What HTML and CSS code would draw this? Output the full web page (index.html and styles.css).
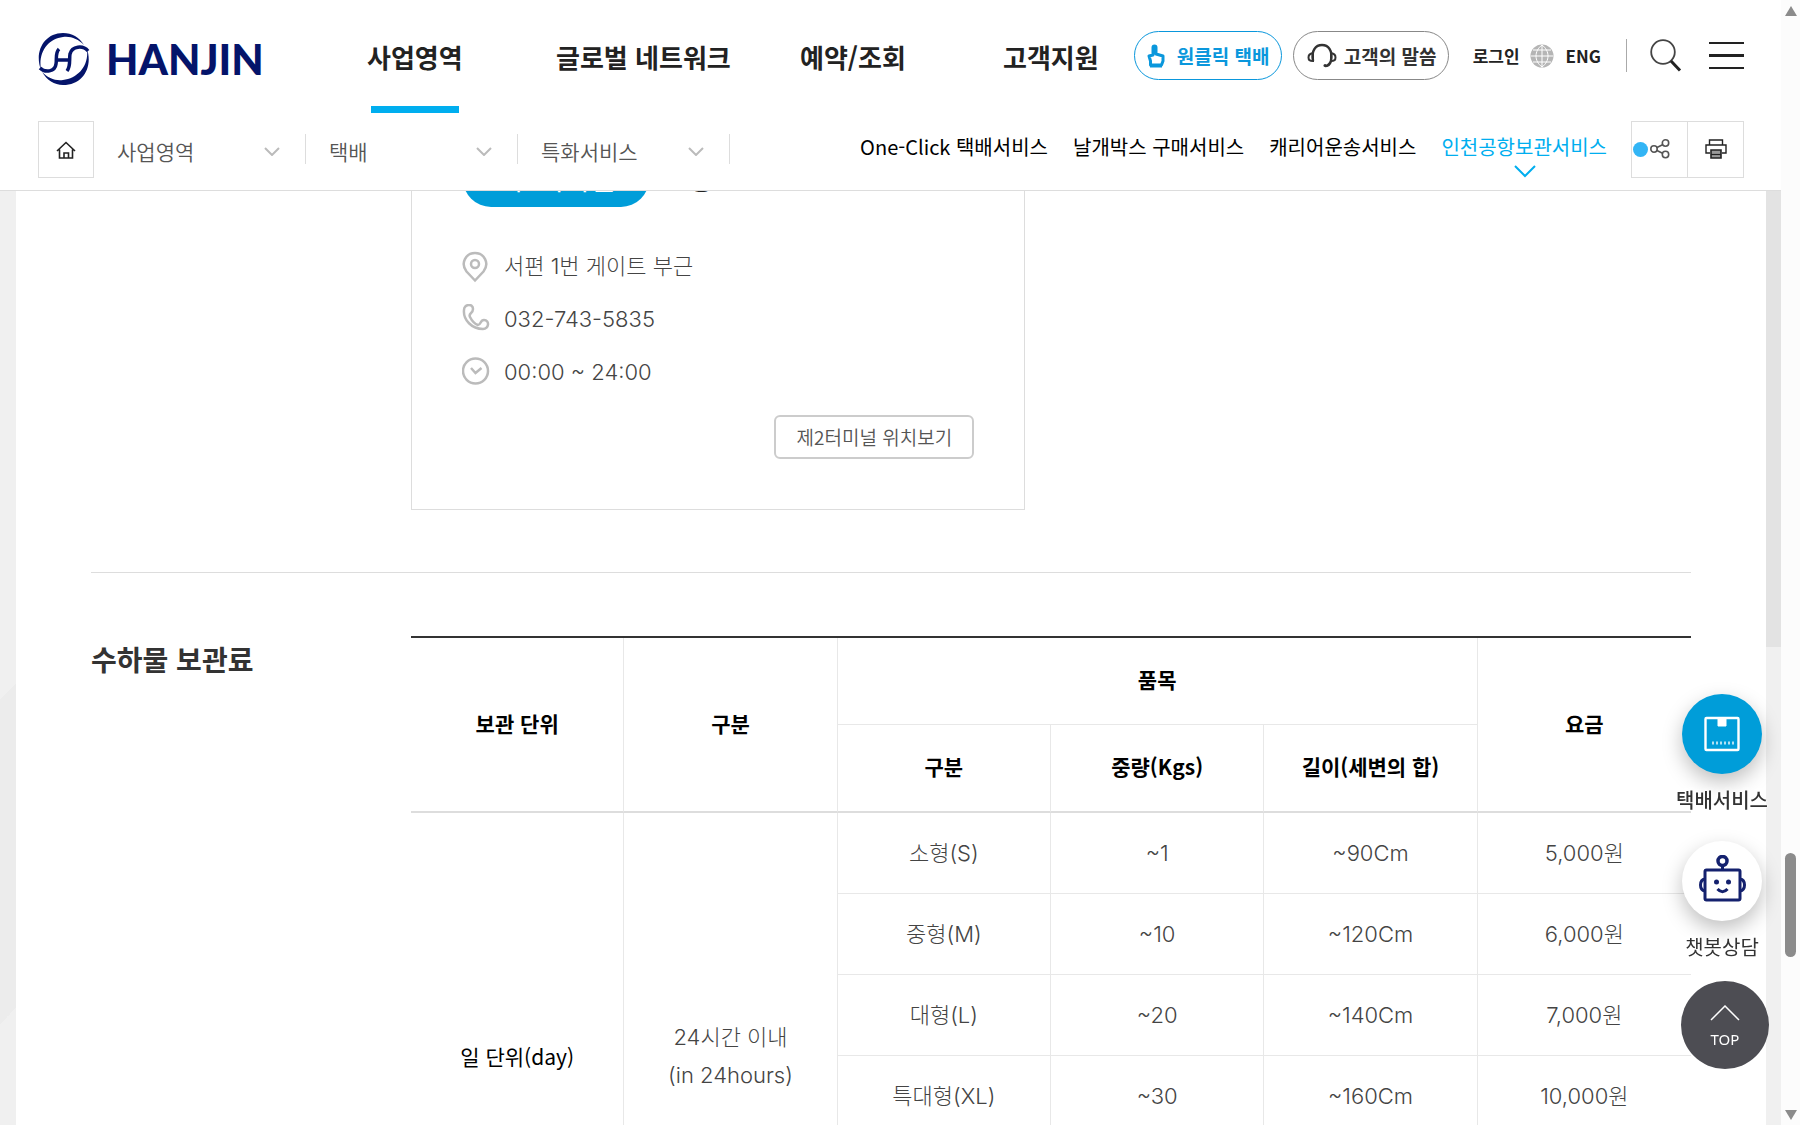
FILE: index.html
```html
<!DOCTYPE html>
<html lang="ko">
<head>
<meta charset="utf-8">
<title>인천공항보관서비스 | HANJIN</title>
<link rel="stylesheet" href="styles.css">
</head>
<body>
<div class="page">
  <header class="header">
    <div class="topbar">
      <a class="logo" href="#">
        <svg width="52" height="54" viewBox="0 0 52 54" fill="none" aria-hidden="true">
          <path d="M3 38C-4 20 6 1 25 1c9 0 16 4 21 12C40 7 33 4 25 5 10 7 0 20 3 38Z" fill="#04146a"/>
          <path d="M49 17c6 18-4 36-24 36C16 53 9 48 4 40c6 6 13 9 21 8C40 46 51 34 49 17Z" fill="#04146a"/>
          <path d="M2 36c5 5 15 4 16-4 1-5-1-11 3-15M50 19c-5-6-16-5-18 3-1 5 1 12-3 17M20 28h11" stroke="#04146a" stroke-width="3.500"/>
        </svg>
        <span>HANJIN</span>
      </a>
      <nav class="gnb" aria-label="주 메뉴">
        <a class="current" href="#">사업영역</a>
        <a href="#">글로벌 네트워크</a>
        <a href="#">예약/조회</a>
        <a href="#">고객지원</a>
      </nav>
      <div class="utils">
        <a class="pill pill-blue" href="#">
          <svg width="18" height="24" viewBox="0 0 18 24" fill="none" stroke="#0a97dc" stroke-width="3" aria-hidden="true"><path d="M3.500 21V17L2 12l4-1V3.500a1.500 1.500 0 0 1 3 0V10l7 2v5l-1.500 4Z" stroke-linejoin="round"/><path d="M3 22h12"/></svg>
          원클릭 택배
        </a>
        <a class="pill pill-gray" href="#">
          <svg width="30" height="25" viewBox="0 0 30 25" fill="none" stroke="#333" stroke-width="2.500" aria-hidden="true"><path d="M6 18C4 7 9 2 15 2s11 5 9 16c-1 3-3 5-6 5"/><path d="M6 10c-6 1-6 8 0 8ZM24 10c6 1 6 8 0 8Z" stroke-width="2"/><circle cx="18" cy="22.500" r="1.500" fill="#333" stroke="none"/></svg>
          고객의 말씀
        </a>
        <a class="login" href="#">로그인</a>
        <a class="lang" href="#">
          <svg width="24" height="24" viewBox="0 0 24 24" aria-hidden="true"><circle cx="12" cy="12" r="11.500" fill="#b5b5b5"/><path d="M12 1v22M1 12h22M3 6h18M3 18h18M12 1C4 7 4 17 12 23M12 1c8 6 8 16 0 22" fill="none" stroke="#fff" stroke-width="1"/></svg>
          ENG
        </a>
        <button class="search" type="button" aria-label="검색">
          <svg width="32" height="34" viewBox="0 0 32 34" fill="none"><circle cx="13" cy="13" r="11.800" stroke="#444" stroke-width="1.800"/><path d="m21 22 9 9.500" stroke="#222" stroke-width="3"/></svg>
        </button>
        <button class="menu" type="button" aria-label="전체 메뉴"><i></i><i></i><i></i></button>
      </div>
    </div>
    <div class="subbar">
      <a class="home" href="#" aria-label="홈">
        <svg width="20" height="18" viewBox="0 0 20 18" fill="none" stroke="#222" stroke-width="1.600"><path d="M1 10 10 1.500 19 10M3.500 8.500V17h13V8.500M8 17v-5h4.500v5"/></svg>
      </a>
      <button class="crumb" type="button">사업영역<svg width="16" height="9" viewBox="0 0 16 9"><path d="m1 1 7 7 7-7"/></svg></button>
      <button class="crumb" type="button">택배<svg width="16" height="9" viewBox="0 0 16 9"><path d="m1 1 7 7 7-7"/></svg></button>
      <button class="crumb" type="button">특화서비스<svg width="16" height="9" viewBox="0 0 16 9"><path d="m1 1 7 7 7-7"/></svg></button>
      <nav class="lnb" aria-label="특화서비스 메뉴">
        <a href="#">One-Click 택배서비스</a>
        <a href="#">날개박스 구매서비스</a>
        <a href="#">캐리어운송서비스</a>
        <a class="current" href="#">인천공항보관서비스<svg width="22" height="13" viewBox="0 0 22 13"><path d="m1 1 10 10L21 1"/></svg></a>
      </nav>
      <div class="tools">
        <button type="button" class="share" aria-label="공유">
          <svg width="20" height="20" viewBox="0 0 20 20" fill="none" stroke="#555" stroke-width="1.600"><circle cx="4" cy="10" r="3.200"/><circle cx="15.500" cy="4" r="3.200"/><circle cx="15.500" cy="15.500" r="3.200"/><path d="m7 8.500 6-3M7 11.500l6 3"/></svg>
        </button>
        <button type="button" aria-label="인쇄">
          <svg width="22" height="20" viewBox="0 0 22 20" fill="none" stroke="#222" stroke-width="1.400"><path d="M4.500 6V1h13v5M5 14H1V6h20v8h-4"/><path d="M6 11h10v8H6Z" fill="#999" stroke-width="1.600"/><path d="M6 15.500h10" stroke-width="1.200"/></svg>
        </button>
      </div>
    </div>
  </header>

  <main class="main">
    <div class="panel">
      <section class="section location">
        <div class="card">
          <div class="card-head"><strong class="terminal">제2터미널</strong><span class="floor">3층</span></div>
          <ul class="info">
            <li><svg width="28" height="32" viewBox="0 0 28 32"><path d="M13 29.500 4.500 20.500C-2 12 4 2 13 2s15 10 8.500 18.500Z"/><circle cx="13" cy="13" r="4"/></svg>서편 1번 게이트 부근</li>
            <li><svg width="28" height="32" viewBox="0 0 28 32"><path d="M2 6c0-6 9-7 9-1 0 5-5 4-3 8s5 7 8 8c3 0 2-5 6-5 6 0 5 9-1 9C10 25 1 16 2 6Z"/></svg>032-743-5835</li>
            <li><svg width="28" height="32" viewBox="0 0 28 32"><circle cx="13.500" cy="14" r="12.500"/><path d="m9 11 4.500 5 6-5"/></svg>00:00 ~ 24:00</li>
          </ul>
          <a class="map-link" href="#">제2터미널 위치보기</a>
        </div>
      </section>

      <section class="section fees">
        <h2>수하물 보관료</h2>
        <table>
          <thead>
            <tr><th rowspan="2" scope="col">보관 단위</th><th rowspan="2" scope="col">구분</th><th colspan="3" scope="colgroup" class="group">품목</th><th rowspan="2" scope="col">요금</th></tr>
            <tr><th scope="col">구분</th><th scope="col">중량(Kgs)</th><th scope="col" class="inner-last">길이(세변의 합)</th></tr>
          </thead>
          <tbody>
            <tr><th rowspan="6" scope="rowgroup">일 단위(day)</th><td rowspan="6">24시간 이내<br>(in 24hours)</td><td>소형(S)</td><td>~1</td><td>~90Cm</td><td>5,000원</td></tr>
            <tr><td>중형(M)</td><td>~10</td><td>~120Cm</td><td>6,000원</td></tr>
            <tr><td>대형(L)</td><td>~20</td><td>~140Cm</td><td>7,000원</td></tr>
            <tr><td>특대형(XL)</td><td>~30</td><td>~160Cm</td><td>10,000원</td></tr>
            <tr><td></td><td></td><td></td><td></td></tr>
            <tr><td></td><td></td><td></td><td></td></tr>
          </tbody>
        </table>
      </section>
    </div>
  </main>
</div>

<aside class="quick">
  <a class="quick-item strong" href="#">
    <span class="disc blue"><svg width="36" height="36" viewBox="0 0 36 36" fill="none" stroke="#fff"><rect x="1.500" y="2" width="33" height="32" rx="1" stroke-width="2.400"/><path d="M14 2h8v8h-8Z" fill="#fff" stroke-width="1"/><path d="M8 27h22" stroke-width="3" stroke-dasharray="2 2" opacity=".7"/></svg></span>
    택배서비스
  </a>
  <a class="quick-item" href="#">
    <span class="disc"><svg width="48" height="48" viewBox="0 4 48 48" fill="none" stroke="#14216e" stroke-width="3"><rect x="7" y="19" width="35" height="30" rx="1.500"/><circle cx="24.500" cy="10" r="4.500" stroke-width="3.500"/><path d="M24.500 14v5M7 28c-6 1-6 11 0 12M42 28c6 1 6 11 0 12M19.500 38c3 3.500 7 3.500 10 0"/><circle cx="18.500" cy="31" r="2.500" fill="#14216e" stroke="none"/><circle cx="30.500" cy="31" r="2.500" fill="#14216e" stroke="none"/></svg></span>
    챗봇상담
  </a>
  <button class="top" type="button"><svg width="30" height="16" viewBox="0 0 30 16" fill="none" stroke="#fff" stroke-width="1.500"><path d="M1 15 15 1l14 14"/></svg>TOP</button>
</aside>

<div class="scrollbar" aria-hidden="true">
  <svg width="14" height="12" viewBox="0 0 14 12"><path d="m7 1 6 10H1Z"/></svg>
  <div class="track"><div class="thumb"></div></div>
  <svg width="14" height="12" viewBox="0 0 14 12"><path d="m7 11 6-10H1Z"/></svg>
</div>
</body>
</html>
```
FILE: styles.css
```css
* { box-sizing: border-box; }

body {
  margin: 0;
  display: flex;
  height: 100vh;
  overflow: hidden;
  background: #fff;
  color: #222;
  font-family: "Noto Sans CJK KR", sans-serif;
}

a { color: inherit; text-decoration: none; }
button { padding: 0; border: 0; background: none; color: inherit; font: inherit; cursor: pointer; }
svg { flex: none; }

.page { flex: 1; min-width: 0; display: flex; flex-direction: column; }

/* header */
.header { flex: none; background: #fff; border-bottom: 1px solid #ddd; position: relative; z-index: 1; }
.topbar { display: flex; height: 113px; padding: 0 37px 0 38px; }

.logo { display: flex; align-items: center; gap: 16px; width: 329px; height: 118px; color: #04146a; }
.logo span { font: 900 42px/48px Lato, sans-serif; }

.gnb { display: grid; grid-template-columns: 189px 244px 203px auto; height: 113px; font-size: 26px; font-weight: 700; line-height: 114px; white-space: nowrap; }
.gnb a { justify-self: start; position: relative; height: 113px; }
.gnb .current::after { content: ""; position: absolute; left: 4px; right: 4px; bottom: 0; height: 7px; background: #00aeef; }

.utils { display: flex; align-items: center; margin-left: auto; height: 111px; font-size: 17px; font-weight: 700; white-space: nowrap; }
.pill { display: flex; align-items: center; height: 49px; border: 1px solid; border-radius: 25px; font-size: 19px; }
.pill-blue { width: 148px; padding-left: 12px; gap: 12px; border-color: #0a97dc; color: #0a97dc; }
.pill-gray { width: 156px; padding-left: 13px; gap: 7px; margin-left: 11px; border-color: #888; color: #333; }
.login { margin-left: 24px; }
.lang { display: flex; align-items: center; gap: 12px; margin-left: 10px; }
.search { display: flex; align-items: center; height: 33px; margin-left: 25px; padding-left: 23px; border-left: 1px solid #aaa; }
.menu { display: flex; flex-direction: column; gap: 10px; width: 35px; margin-left: 27px; }
.menu i { height: 2px; background: #222; }
.menu i:nth-child(2) { height: 3px; }

.subbar { display: flex; height: 77px; padding: 8px 37px 0 38px; }
.home { display: flex; align-items: center; justify-content: center; width: 56px; height: 57px; border: 1px solid #ddd; }
.crumb { display: flex; align-items: center; justify-content: space-between; width: 212px; height: 30px; margin-top: 13px; padding: 4px 25px 0 23px; border-right: 1px solid #ddd; color: #555; font-size: 21px; font-weight: 350; line-height: 30px; }
.crumb svg { fill: none; stroke: #bbb; stroke-width: 2; }
.lnb { display: flex; gap: 25px; margin-left: auto; color: #000; font-size: 20px; line-height: 52px; white-space: nowrap; }
.lnb a { position: relative; }
.lnb .current { color: #00aeef; }
.lnb svg { position: absolute; left: 50%; top: 44px; margin-left: -10px; fill: none; stroke: #00aeef; stroke-width: 2; }
.tools { display: flex; height: 57px; margin-left: 24px; border: 1px solid #ddd; }
.tools button { display: flex; align-items: center; justify-content: center; width: 55px; padding-bottom: 2px; position: relative; }
.tools button + button { width: 56px; border-left: 1px solid #ddd; }
.share::before { content: ""; position: absolute; left: 1px; top: 20px; width: 15px; height: 15px; border-radius: 50%; background: #33b5f5; }

/* content */
.main {
  flex: 1;
  min-height: 0;
  overflow: hidden;
  padding: 0 15px 0 16px;
  background:
    linear-gradient(#e3e3e3, #e3e3e3) right top / 15px 456px no-repeat,
    linear-gradient(135deg, transparent 50%, #ececec 50%) left 493px / 16px 16px no-repeat,
    linear-gradient(#ececec, #ececec) left 509px / 16px 308px no-repeat,
    linear-gradient(135deg, #ececec 50%, transparent 50%) left 817px / 16px 16px no-repeat,
    #f0f0f0;
}
.panel { padding: 0 75px; background: #fff; }
.section { display: flex; }
.location { padding: 0 0 62px 320px; border-bottom: 1px solid #ddd; }
.card { display: flex; flex-direction: column; width: 48%; margin-top: -91px; padding: 50px; border: 1px solid #ddd; }
.card-head { display: flex; align-items: center; gap: 24px; height: 56px; margin-left: 1px; font-size: 28px; line-height: 54px; }
.terminal { width: 186px; height: 56px; border-radius: 28px; background: #009dd9; color: #fff; font-weight: 400; text-align: center; }
.floor { height: 56px; }
.info { margin: 33px 0 0; padding: 0; list-style: none; color: #444; font: 300 22px/53px Inter, "Noto Sans CJK KR", sans-serif; }
.info li { display: flex; align-items: center; gap: 14px; height: 53px; }
.info svg { fill: none; stroke: #bbb; stroke-width: 2.5; }
.map-link { align-self: flex-end; width: 200px; height: 44px; margin-top: 16px; border: 2px solid #ccc; border-radius: 6px; color: #555; font-size: 19px; font-weight: 350; line-height: 40px; text-align: center; }

.fees { padding-top: 63px; }
.fees h2 { flex: none; width: 320px; margin: 0; color: #333; font-size: 28px; font-weight: 700; line-height: 46px; }
table { flex: 1; width: 100%; border-collapse: separate; border-spacing: 0; border-top: 2px solid #333; table-layout: fixed; color: #444; font: 300 22px/38px Inter, "Noto Sans CJK KR", sans-serif; text-align: center; }
th, td { height: 81px; padding: 0; border-right: 1px solid #e8e8e8; border-bottom: 1px solid #e8e8e8; }
th { color: #000; font-family: "Noto Sans CJK KR", sans-serif; font-size: 21px; font-weight: 400; }
thead th { height: 88px; padding-bottom: 4px; border-bottom: 2px solid #ddd; font-weight: 700; }
thead .group { height: 87px; border-bottom: 1px solid #e8e8e8; }
tr > :last-child:not(.inner-last) { border-right: 0; }

/* floating shortcuts */
.quick { position: fixed; right: 31px; bottom: 56px; z-index: 2; display: flex; flex-direction: column; align-items: flex-end; width: 94px; }
.quick-item { display: flex; flex-direction: column; align-items: center; gap: 13px; width: 94px; margin-bottom: 28px; color: #333; font-size: 20px; line-height: 26px; white-space: nowrap; text-shadow: 0 0 2px #fff, 0 0 2px #fff, 0 0 3px #fff; }
.quick-item + .quick-item { margin-bottom: 21px; }
.strong { font-weight: 500; }
.disc { display: flex; align-items: center; justify-content: center; width: 80px; height: 80px; padding-bottom: 4px; border-radius: 50%; background: #fff; box-shadow: 0 8px 20px rgba(0, 0, 0, .25); }
.disc.blue { padding: 0; background: #009dd9; }
.top { display: flex; flex-direction: column; align-items: center; gap: 8px; width: 88px; height: 88px; padding-top: 24px; border-radius: 50%; background: #4d4d53; color: #fff; font: 400 15px/20px "Noto Sans", sans-serif; }

/* scroll bar */
.scrollbar { flex: none; display: flex; flex-direction: column; align-items: center; width: 19px; padding: 5px 0 4px; background: #fcfcfc; fill: #8b8b8b; }
.track { flex: 1; display: flex; flex-direction: column; justify-content: flex-end; padding-bottom: 152px; }
.thumb { width: 11px; height: 104px; border-radius: 6px; background: #8b8b8b; }
```
